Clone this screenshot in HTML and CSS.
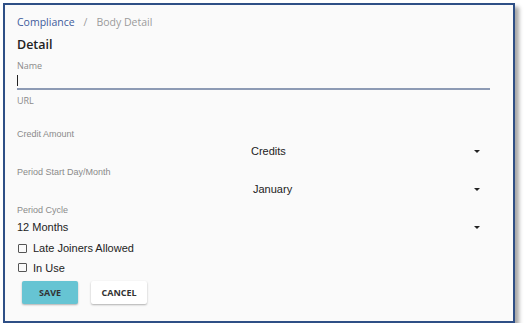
FILE: index.html
```html
<!DOCTYPE html>
<html lang="en">
<head>
    <meta charset="utf-8">
    <title>Body Detail</title>
    <link rel="stylesheet" href="styles.css">
</head>
<body>
    <div class="frame">
        <div class="crumbs">
            <a href="#">Compliance</a><span class="sep">/</span><span class="here">Body Detail</span>
        </div>
        <h1>Detail</h1>

        <div class="field name">
            <p class="label">Name</p>
            <div class="input"><span class="caret"></span></div>
        </div>
        <div class="field url">
            <p class="label">URL</p>
        </div>

        <div class="field credit">
            <p class="label arial">Credit Amount</p>
            <div class="select"><span class="value v1">Credits</span><span class="arrow"></span></div>
        </div>
        <div class="field">
            <p class="label arial">Period Start Day/Month</p>
            <div class="select"><span class="value v2">January</span><span class="arrow"></span></div>
        </div>
        <div class="field">
            <p class="label arial">Period Cycle</p>
            <div class="select"><span class="value">12 Months</span><span class="arrow"></span></div>
        </div>

        <label class="check"><span class="box"></span>Late Joiners Allowed</label>
        <label class="check"><span class="box"></span>In Use</label>

        <div class="buttons">
            <button class="save">SAVE</button>
            <button class="cancel">CANCEL</button>
        </div>
    </div>
</body>
</html>
```
FILE: styles.css
```css
body{
    margin: 0;
    background-color: white;
    font-family: "Liberation Sans", Arial, sans-serif;
}
.frame{
    box-sizing: border-box;
    margin: 3px 0 0 3px;
    width: 512px;
    height: 320px;
    border: 2px solid #2e4f86;
    background-color: #fafafa;
    box-shadow: 4px 4px 4px rgba(0,0,0,0.35);
    padding: 9px 0 0 12px;
}
.crumbs{
    font-family: "Open Sans", sans-serif;
    font-size: 10.5px;
    line-height: 16px;
    color: #9a9a9a;
}
.crumbs a{
    color: #3f5c9c;
    text-decoration: none;
}
.sep{
    margin: 0 9px;
}
h1{
    margin: 7px 0 0 0;
    font-family: "Open Sans", sans-serif;
    font-size: 12.5px;
    font-weight: 600;
    line-height: 16px;
    color: #222;
}
.field{
    width: 473px;
}
.label{
    margin: 4px 0 0 0;
    font-family: "Open Sans", sans-serif;
    font-size: 9px;
    line-height: 12px;
    color: #8a8a8a;
}
.label.arial{
    font-family: "Liberation Sans", Arial, sans-serif;
}
.name .label{
    margin-top: 7px;
}
.url .label{
    margin-top: 5px;
}
.credit .label{
    margin-top: 21px;
}
.input{
    height: 16px;
    border-bottom: 2px solid #8d9ab4;
    display: flex;
    align-items: center;
}
.caret{
    display: block;
    width: 1px;
    height: 11px;
    background-color: #222;
    margin-top: 1px;
}
.select{
    height: 22px;
    display: flex;
    align-items: center;
    justify-content: space-between;
    font-size: 11px;
    color: #222;
}
.value.v1{
    margin-left: 234px;
}
.value.v2{
    margin-left: 236px;
}
.select .value{
    flex: 1;
}
.arrow{
    width: 0;
    height: 0;
    border-left: 3px solid transparent;
    border-right: 3px solid transparent;
    border-top: 3px solid #222;
    margin-right: 10px;
}
.check{
    display: flex;
    align-items: center;
    height: 20px;
    font-size: 11px;
    color: #222;
}
.check + .check{
    height: 19px;
}
.box{
    box-sizing: border-box;
    width: 9px;
    height: 9px;
    border: 1px solid #555;
    border-radius: 1px;
    margin: 0 6px 0 1px;
}
.buttons{
    display: flex;
    gap: 13px;
    margin: 4px 0 0 5px;
}
button{
    width: 56px;
    height: 23px;
    border: none;
    border-radius: 2px;
    font-family: "Open Sans", sans-serif;
    font-size: 9px;
    font-weight: 700;
    color: #333;
    box-shadow: 0 1px 2px rgba(0,0,0,0.3);
}
.save{
    background-color: #66c4d3;
}
.cancel{
    background-color: white;
}
```
